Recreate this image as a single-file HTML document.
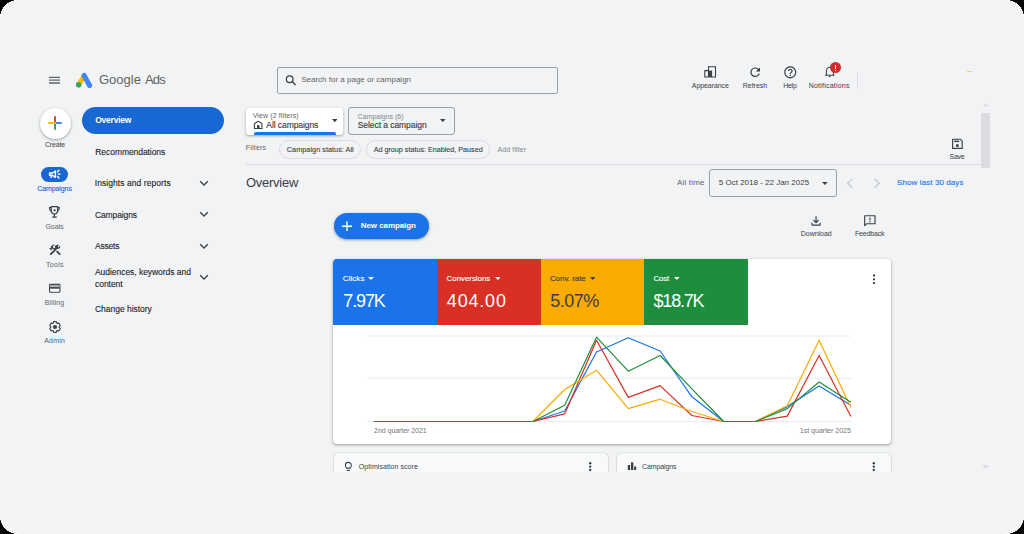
<!DOCTYPE html>
<html><head><meta charset="utf-8">
<style>
*{margin:0;padding:0;box-sizing:border-box}
html,body{width:1024px;height:534px;overflow:hidden;background:#000}
body{font-family:"Liberation Sans",sans-serif;color:#3c4043}
#frame{position:absolute;left:0;top:0;width:1024px;height:534px;background:#f1f3f4;overflow:hidden}
.a{position:absolute}
.t{position:absolute;white-space:nowrap;line-height:1}
svg{display:block}
</style></head><body>
<div id="frame">
<svg class="a" style="left:45px;top:72px" width="20" height="18" viewBox="0 0 20 18"><path d="M4 5.4 H15 M4 8.2 H15 M4 11 H15" stroke="#5f6368" stroke-width="1.3"/></svg>
<svg class="a" style="left:76px;top:72px" width="17" height="16" viewBox="0 0 17 16"><path d="M2.6 12.8 L7.9 4.2" stroke="#fbbc04" stroke-width="4.9"/><path d="M8.1 3.5 L13.6 13.5" stroke="#4285f4" stroke-width="5.1" stroke-linecap="round"/><circle cx="2.6" cy="12.8" r="2.8" fill="#34a853"/></svg>
<div class="t" style="left:99px;top:73.4px;font-size:13px;color:#5f6368">Google <span style="letter-spacing:-0.9px;margin-left:0.5px">Ads</span></div>
<div class="a" style="left:277px;top:67px;width:281px;height:27px;border:1px solid #9aa0a6;border-radius:2px"></div>
<svg class="a" style="left:285px;top:75px" width="12" height="11" viewBox="0 0 12 11"><circle cx="4.7" cy="4.2" r="3.3" fill="none" stroke="#3c4043" stroke-width="1.25"/><path d="M7.1 6.6 L10.6 10" stroke="#3c4043" stroke-width="1.4"/></svg>
<div class="t" style="left:301.20px;top:76.43px;font-size:8px;color:#5f6368">Search for a page or campaign</div>
<svg class="a" style="left:700px;top:62px" width="20" height="20" viewBox="0 0 20 20"><path d="M4.8 8.6 H8.5 V15 H4.8 Z M8.5 4.8 H15.5 V15 H8.5 Z" fill="none" stroke="#3c4043" stroke-width="1.1"/><rect x="8.5" y="8.6" width="3.6" height="6.4" fill="#3c4043"/></svg>
<div class="t" style="left:650.35px;width:120px;text-align:center;top:81.87px;font-size:7px;color:#3c4043;letter-spacing:-0.078px;text-indent:-0.078px">Appearance</div>
<svg class="a" style="left:747.8px;top:65.1px" width="14.4" height="14.4" viewBox="0 0 24 24"><path fill="#3c4043" d="M17.65 6.35C16.2 4.9 14.21 4 12 4c-4.42 0-7.99 3.58-7.990 8s3.57 8 7.99 8c3.73 0 6.84-2.55 7.73-6h-2.08c-.82 2.33-3.04 4-5.65 4-3.31 0-6-2.69-6-6s2.69-6 6-6c1.66 0 3.14.69 4.22 1.78L13 11h7V4l-2.35 2.35z"/></svg>
<div class="t" style="left:695.00px;width:120px;text-align:center;top:81.87px;font-size:7px;color:#3c4043;letter-spacing:-0.017px;text-indent:-0.017px">Refresh</div>
<svg class="a" style="left:782.7px;top:65.3px" width="14.5" height="14.5" viewBox="0 0 24 24"><path fill="#3c4043" d="M11 18h2v-2h-2v2zm1-16C6.48 2 2 6.48 2 12s4.48 10 10 10 10-4.48 10-10S17.52 2 12 2zm0 18c-4.41 0-8-3.59-8-8s3.59-8 8-8 8 3.59 8 8-3.59 8-8 8zm0-14c-2.21 0-4 1.79-4 4h2c0-1.1.9-2 2-2s2 .9 2 2c0 2-3 1.75-3 5h2c0-2.25 3-2.5 3-5 0-2.21-1.79-4-4-4z"/></svg>
<div class="t" style="left:730.00px;width:120px;text-align:center;top:81.87px;font-size:7px;color:#3c4043;letter-spacing:-0.267px;text-indent:-0.267px">Help</div>
<svg class="a" style="left:819px;top:61px" width="20" height="20" viewBox="0 0 20 20"><path d="M7.4 14 V10.2 A3.5 3.9 0 0 1 14.4 10.2 V14 M6 14.2 H15.6" fill="none" stroke="#3c4043" stroke-width="1.1"/><path d="M9.9 15.6 H11.5" stroke="#3c4043" stroke-width="1.1"/></svg>
<div class="a" style="left:829.8px;top:62px;width:11.2px;height:11.2px;border-radius:50%;background:#cc2f27"></div>
<div class="a" style="left:834.8px;top:65px;width:1.3px;height:4.2px;background:#fff"></div>
<div class="a" style="left:834.8px;top:69.9px;width:1.3px;height:1.1px;background:#fff"></div>
<div class="t" style="left:769.05px;width:120px;text-align:center;top:81.87px;font-size:7px;color:#3c4043;letter-spacing:0.225px;text-indent:0.225px">Notifications</div>
<div class="a" style="left:857px;top:72px;width:1px;height:17px;background:#dadce0"></div>
<div class="a" style="left:966.5px;top:71px;width:5.5px;height:1px;background:rgba(251,188,4,.6)"></div>
<div class="a" style="left:40px;top:108px;width:31px;height:31px;border-radius:50%;background:#fff;box-shadow:0 1px 2px rgba(60,64,67,.3),0 1px 3px 1px rgba(60,64,67,.12)"></div>
<svg class="a" style="left:48px;top:116px" width="14" height="14" viewBox="0 0 14 14"><path d="M7 1 V7" stroke="#ea4335" stroke-width="2" stroke-linecap="round"/><path d="M7 7 H13" stroke="#4285f4" stroke-width="2" stroke-linecap="round"/><path d="M7 7 V13" stroke="#34a853" stroke-width="2" stroke-linecap="round"/><path d="M1 7 H7" stroke="#fbbc04" stroke-width="2" stroke-linecap="round"/></svg>
<div class="t" style="left:-5.00px;width:120px;text-align:center;top:140.97px;font-size:7px;color:#3c4043;letter-spacing:-0.160px;text-indent:-0.160px">Create</div>
<div class="a" style="left:41px;top:166.5px;width:27px;height:15.5px;border-radius:8px;background:#1967d2"></div>
<svg class="a" style="left:45px;top:164px" width="20" height="20" viewBox="0 0 20 20"><path d="M4.6 9 H7.5 L10.4 7 V13.3 L7.5 11.3 H4.6 Z" fill="none" stroke="#fff" stroke-width="1.45" stroke-linejoin="round"/><path d="M5.9 11.4 L6.4 13.9" stroke="#fff" stroke-width="1.5"/><path d="M12.6 7.8 L13.9 6.3 M13.2 10.1 H15 M12.6 12.5 L13.9 14" stroke="#fff" stroke-width="1.4" stroke-linecap="round"/></svg>
<div class="t" style="left:-5.40px;width:120px;text-align:center;top:184.57px;font-size:7px;color:#1967d2;letter-spacing:-0.100px;text-indent:-0.100px;-webkit-text-stroke:0.12px #1967d2">Campaigns</div>
<svg class="a" style="left:45px;top:202px" width="20" height="20" viewBox="0 0 20 20"><path d="M6.2 4.6 H12.6 V8.6 C12.6 10.6 11 12 9.4 12.2 C7.8 12 6.2 10.6 6.2 8.6 Z" fill="none" stroke="#3c4043" stroke-width="1.2"/><path d="M6.2 5.6 H4.5 V6.6 C4.5 7.9 5.2 8.8 6.4 9.2 M12.6 5.6 H14.3 V6.6 C14.3 7.9 13.6 8.8 12.4 9.2" fill="none" stroke="#3c4043" stroke-width="1.1"/><path d="M9.4 12.2 V15.2 M7.2 15.2 H11.8" stroke="#3c4043" stroke-width="1.2"/><circle cx="9.6" cy="8.3" r="1.1" fill="#3c4043"/></svg>
<div class="t" style="left:-5.50px;width:120px;text-align:center;top:222.67px;font-size:7px;color:#5f6368;letter-spacing:-0.050px;text-indent:-0.050px">Goals</div>
<svg class="a" style="left:47.6px;top:243.3px" width="14" height="14" viewBox="0 0 24 24"><path fill="#3c4043" d="M13.783 15.172l2.121-2.121 5.996 5.996-2.121 2.121zM17.5 10c1.93 0 3.5-1.57 3.5-3.5 0-.58-.16-1.12-.41-1.6l-2.7 2.7-1.49-1.49 2.7-2.7c-.48-.25-1.02-.41-1.6-.41C13.57 3 12 4.57 12 6.5c0 .41.08.8.21 1.16l-1.85 1.85-1.78-1.78.71-.71-1.41-1.41L12 3.49c-1.17-1.170-3.07-1.17-4.24 0L4.22 7.03l1.41 1.41H2.81l-.71.71 3.54 3.54.71-.71V9.15l1.41 1.41.71-.71 1.78 1.78-7.41 7.41 2.12 2.12L16.34 9.79c.36.13.75.21 1.16.21z"/></svg>
<div class="t" style="left:-5.25px;width:120px;text-align:center;top:260.97px;font-size:7px;color:#5f6368;letter-spacing:0.325px;text-indent:0.325px">Tools</div>
<svg class="a" style="left:45px;top:279px" width="20" height="20" viewBox="0 0 20 20"><rect x="4.6" y="5.4" width="10.3" height="7.8" rx="0.8" fill="#fff" stroke="#3c4043" stroke-width="1.1"/><rect x="5.1" y="5.9" width="9.3" height="2.3" fill="#a8abb0"/><rect x="5.1" y="8.1" width="9.3" height="1.6" fill="#3c4043"/></svg>
<div class="t" style="left:-5.50px;width:120px;text-align:center;top:299.07px;font-size:7px;color:#5f6368;letter-spacing:0.100px;text-indent:0.100px">Billing</div>
<svg class="a" style="left:44.8px;top:316.8px" width="20" height="20" viewBox="0 0 20 20"><path d="M8.00 6.54 L8.67 4.66 L11.33 4.66 L12.00 6.54 L13.96 6.18 L15.29 8.48 L14.00 10.00 L15.29 11.52 L13.96 13.82 L12.00 13.46 L11.33 15.34 L8.67 15.34 L8.00 13.46 L6.04 13.82 L4.71 11.52 L6.00 10.00 L4.71 8.48 L6.04 6.18 Z" fill="none" stroke="#3c4043" stroke-width="1.15" stroke-linejoin="round"/><circle cx="10" cy="10" r="2.1" fill="#3c4043"/></svg>
<div class="t" style="left:-5.50px;width:120px;text-align:center;top:337.47px;font-size:7px;color:#5f6368;letter-spacing:0.200px;text-indent:0.200px">Admin</div>
<div class="a" style="left:82px;top:107.3px;width:142px;height:27px;border-radius:14px;background:#1967d2"></div>
<div class="t" style="left:95.15px;top:115.70px;font-size:8.5px;color:#fff;letter-spacing:-0.214px;font-weight:bold">Overview</div>
<div class="t" style="left:95.30px;top:147.70px;font-size:8.5px;color:#202124;letter-spacing:-0.064px;-webkit-text-stroke:0.1px #202124">Recommendations</div>
<div class="t" style="left:94.80px;top:179.20px;font-size:8.5px;color:#202124;letter-spacing:0.063px;-webkit-text-stroke:0.1px #202124">Insights and reports</div>
<div class="t" style="left:95.00px;top:210.70px;font-size:8.5px;color:#202124;letter-spacing:-0.125px;-webkit-text-stroke:0.1px #202124">Campaigns</div>
<div class="t" style="left:95.00px;top:242.20px;font-size:8.5px;color:#202124;letter-spacing:-0.200px;-webkit-text-stroke:0.1px #202124">Assets</div>
<div class="t" style="left:95.00px;top:268.40px;font-size:8.5px;color:#202124;letter-spacing:-0.045px;-webkit-text-stroke:0.1px #202124">Audiences, keywords and</div>
<div class="t" style="left:95.00px;top:279.80px;font-size:8.5px;color:#202124;letter-spacing:-0.045px;-webkit-text-stroke:0.1px #202124">content</div>
<div class="t" style="left:95.00px;top:305.40px;font-size:8.5px;color:#202124;letter-spacing:-0.023px;-webkit-text-stroke:0.1px #202124">Change history</div>
<svg class="a" style="left:199px;top:180px" width="10" height="7" viewBox="0 0 10 7"><path d="M1.2 1.2 L5 5 L8.8 1.2" fill="none" stroke="#3c4043" stroke-width="1.3"/></svg>
<svg class="a" style="left:199px;top:211px" width="10" height="7" viewBox="0 0 10 7"><path d="M1.2 1.2 L5 5 L8.8 1.2" fill="none" stroke="#3c4043" stroke-width="1.3"/></svg>
<svg class="a" style="left:199px;top:243px" width="10" height="7" viewBox="0 0 10 7"><path d="M1.2 1.2 L5 5 L8.8 1.2" fill="none" stroke="#3c4043" stroke-width="1.3"/></svg>
<svg class="a" style="left:199px;top:274px" width="10" height="7" viewBox="0 0 10 7"><path d="M1.2 1.2 L5 5 L8.8 1.2" fill="none" stroke="#3c4043" stroke-width="1.3"/></svg>
<div class="a" style="left:246px;top:108px;width:97px;height:26.5px;background:#fff;border-radius:3px;box-shadow:0 1px 2px rgba(60,64,67,.3),0 1px 3px 1px rgba(60,64,67,.1)"></div>
<div class="a" style="left:253.5px;top:132px;width:82px;height:2.5px;background:#1a73e8;border-radius:2px 2px 0 0"></div>
<div class="t" style="left:252.70px;top:111.87px;font-size:7px;color:#5f6368;letter-spacing:0.120px">View (2 filters)</div>
<svg class="a" style="left:250px;top:116px" width="16" height="16" viewBox="0 0 16 16"><path d="M4.4 12.5 V7.4 L8.2 5.3 L12 7.4 V12.5 Z" fill="none" stroke="#3c4043" stroke-width="1.1" stroke-linejoin="round"/><rect x="7" y="9.1" width="2.5" height="3.4" fill="#3c4043"/></svg>
<div class="t" style="left:266.30px;top:121.10px;font-size:8.5px;color:#3c4043;letter-spacing:-0.075px;-webkit-text-stroke:0.15px #3c4043">All campaigns</div>
<svg class="a" style="left:331.8px;top:119.4px" width="5.6" height="3.2" viewBox="0 0 5.6 3.2"><path d="M0 0 H5.6 L2.8 3.2 Z" fill="#3c4043"/></svg>
<div class="a" style="left:348px;top:107px;width:107px;height:28px;border:1px solid #9aa0a6;border-radius:3px"></div>
<div class="t" style="left:357.70px;top:113.17px;font-size:7px;color:#80868b">Campaigns (6)</div>
<div class="t" style="left:357.70px;top:121.10px;font-size:8.5px;color:#3c4043;letter-spacing:-0.062px;-webkit-text-stroke:0.15px #3c4043">Select a campaign</div>
<svg class="a" style="left:440.2px;top:119.2px" width="5.6" height="3.2" viewBox="0 0 5.6 3.2"><path d="M0 0 H5.6 L2.8 3.2 Z" fill="#3c4043"/></svg>
<div class="t" style="left:245.70px;top:144.17px;font-size:7px;color:#5f6368;letter-spacing:0.217px">Filters</div>
<div class="a" style="left:279.2px;top:140.1px;width:82.2px;height:18.5px;border:1px solid #dadce0;border-radius:9.5px"></div>
<div class="t" style="left:286.80px;top:145.92px;font-size:7.3px;color:#3c4043;letter-spacing:0.021px;-webkit-text-stroke:0.1px #3c4043">Campaign status: All</div>
<div class="a" style="left:366.2px;top:140.2px;width:124.2px;height:18.4px;border:1px solid #dadce0;border-radius:9.5px"></div>
<div class="t" style="left:373.70px;top:146.02px;font-size:7.3px;color:#3c4043;letter-spacing:-0.055px;-webkit-text-stroke:0.1px #3c4043">Ad group status: Enabled, Paused</div>
<div class="t" style="left:497.50px;top:146.27px;font-size:7px;color:#80868b;letter-spacing:0.111px">Add filter</div>
<svg class="a" style="left:948px;top:135px" width="20" height="18" viewBox="0 0 20 18"><path d="M4.6 4.2 H12.2 L14.2 6.2 V13.4 H4.6 Z" fill="none" stroke="#3c4043" stroke-width="1.15" stroke-linejoin="round"/><rect x="6.2" y="5.6" width="5" height="1.5" fill="#3c4043"/><circle cx="9.4" cy="10.4" r="1.5" fill="#3c4043"/></svg>
<div class="t" style="left:897.15px;width:120px;text-align:center;top:153.37px;font-size:7px;color:#3c4043;letter-spacing:-0.300px;text-indent:-0.300px">Save</div>
<div class="a" style="left:246px;top:164px;width:734px;height:1px;background:#dadce0"></div>
<div class="a" style="left:980.5px;top:112.8px;width:9px;height:55.2px;background:#dadce0"></div>
<svg class="a" style="left:982px;top:103px" width="7" height="4" viewBox="0 0 7 4"><path d="M0.5 3.5 L3.5 0.5 L6.5 3.5 Z" fill="#dadce0"/></svg>
<svg class="a" style="left:982px;top:465px" width="7" height="4" viewBox="0 0 7 4"><path d="M0.5 0.5 L3.5 3.5 L6.5 0.5 Z" fill="#dadce0"/></svg>
<div class="t" style="left:246.00px;top:176.30px;font-size:13px;color:#3c4043;letter-spacing:-0.271px">Overview</div>
<div class="t" style="left:677.00px;top:179.23px;font-size:8px;color:#5f6368;letter-spacing:0.171px">All time</div>
<div class="a" style="left:709px;top:169px;width:128px;height:28px;border:1px solid #9aa0a6;border-radius:3px"></div>
<div class="t" style="left:718.80px;top:179.23px;font-size:8px;color:#3c4043">5 Oct 2018 - 22 Jan 2025</div>
<svg class="a" style="left:822px;top:182.1px" width="5.8" height="3" viewBox="0 0 5.8 3"><path d="M0 0 H5.8 L2.9 3 Z" fill="#3c4043"/></svg>
<svg class="a" style="left:845px;top:177px" width="10" height="12" viewBox="0 0 10 12"><path d="M7.3 1.8 L2.6 6.2 L7.3 10.6" fill="none" stroke="#bdc1c6" stroke-width="1.1"/></svg>
<svg class="a" style="left:872px;top:177px" width="10" height="12" viewBox="0 0 10 12"><path d="M2.6 1.8 L7.3 6.2 L2.6 10.6" fill="none" stroke="#bdc1c6" stroke-width="1.1"/></svg>
<div class="t" style="left:897.10px;top:179.03px;font-size:8px;color:#1a73e8;letter-spacing:0.088px;-webkit-text-stroke:0.12px #1a73e8">Show last 30 days</div>
<div class="a" style="left:333.8px;top:212.7px;width:95.6px;height:26.8px;border-radius:14px;background:#1a73e8;box-shadow:0 1px 2px rgba(60,64,67,.3),0 1px 3px 1px rgba(60,64,67,.15)"></div>
<svg class="a" style="left:340px;top:219.4px" width="14" height="14" viewBox="0 0 14 14"><path d="M7 2.4 V12.1 M2 7.2 H12" stroke="#fff" stroke-width="1.4"/></svg>
<div class="t" style="left:360.80px;top:222.23px;font-size:8px;color:#fff;letter-spacing:-0.082px;font-weight:bold">New campaign</div>
<svg class="a" style="left:809.45px;top:213.65px" width="14.1" height="14.1" viewBox="0 -960 960 960"><path fill="#3c4043" d="M480-320 280-520l56-58 104 104v-326h80v326l104-104 56 58-200 200ZM240-160q-33 0-56.5-23.5T160-240v-120h80v120h480v-120h80v120q0 33-23.5 56.5T720-160H240Z"/></svg>
<div class="t" style="left:756.25px;width:120px;text-align:center;top:229.87px;font-size:7px;color:#3c4043;letter-spacing:-0.043px;text-indent:-0.043px">Download</div>
<svg class="a" style="left:862px;top:213px" width="16" height="16" viewBox="0 0 16 16"><path d="M2.7 2.7 H13 V10.7 H4.6 L2.7 12.6 Z" fill="none" stroke="#3c4043" stroke-width="1.15" stroke-linejoin="round"/><path d="M7.9 4.4 V7.3" stroke="#3c4043" stroke-width="1.2"/><rect x="7.3" y="8.2" width="1.2" height="1.2" fill="#3c4043"/></svg>
<div class="t" style="left:809.70px;width:120px;text-align:center;top:229.87px;font-size:7px;color:#3c4043;letter-spacing:-0.171px;text-indent:-0.171px">Feedback</div>
<div class="a" style="left:333px;top:259px;width:558px;height:185px;background:#fff;border-radius:4px;box-shadow:0 1px 2px rgba(60,64,67,.3),0 1px 3px 1px rgba(60,64,67,.15);overflow:hidden"><div class="a" style="left:0;top:0;width:104px;height:66px;background:#1a73e8"></div><div class="a" style="left:104px;top:0;width:103.5px;height:66px;background:#d93025"></div><div class="a" style="left:207.5px;top:0;width:103.5px;height:66px;background:#f9ab00"></div><div class="a" style="left:311px;top:0;width:103.7px;height:66px;background:#1e8e3e"></div></div>
<div class="t" style="left:342.80px;top:274.53px;font-size:8px;color:#fff;letter-spacing:0.060px;-webkit-text-stroke:0.12px #fff">Clicks</div>
<svg class="a" style="left:368.2px;top:277.2px" width="5.9" height="3" viewBox="0 0 5.9 3"><path d="M0 0 H5.9 L2.95 3 Z" fill="#fff"/></svg>
<div class="t" style="left:343.30px;top:291.76px;font-size:18px;color:#fff;letter-spacing:-1.125px">7.97K</div>
<div class="t" style="left:446.60px;top:274.53px;font-size:8px;color:#fff;letter-spacing:-0.080px;-webkit-text-stroke:0.12px #fff">Conversions</div>
<svg class="a" style="left:494.7px;top:277.2px" width="5.8" height="3" viewBox="0 0 5.8 3"><path d="M0 0 H5.8 L2.9 3 Z" fill="#fff"/></svg>
<div class="t" style="left:446.80px;top:291.76px;font-size:18px;color:#fff;letter-spacing:0.820px">404.00</div>
<div class="t" style="left:549.90px;top:274.53px;font-size:8px;color:#3c4043;letter-spacing:-0.044px;-webkit-text-stroke:0.12px #3c4043">Conv. rate</div>
<svg class="a" style="left:589.9px;top:277.2px" width="5.5" height="3" viewBox="0 0 5.5 3"><path d="M0 0 H5.5 L2.75 3 Z" fill="#3c4043"/></svg>
<div class="t" style="left:550.30px;top:291.76px;font-size:18px;color:#3c4043;letter-spacing:-0.525px">5.07%</div>
<div class="t" style="left:653.60px;top:274.53px;font-size:8px;color:#fff;letter-spacing:-0.300px;-webkit-text-stroke:0.12px #fff">Cost</div>
<svg class="a" style="left:674.1px;top:277.2px" width="5.6" height="3" viewBox="0 0 5.6 3"><path d="M0 0 H5.6 L2.8 3 Z" fill="#fff"/></svg>
<div class="t" style="left:653.60px;top:291.76px;font-size:18px;color:#fff;letter-spacing:-1.240px">$18.7K</div>
<svg class="a" style="left:871px;top:273px" width="6" height="13" viewBox="0 0 6 13"><circle cx="3" cy="2.5" r="1.15" fill="#3c4043"/><circle cx="3" cy="6.3" r="1.15" fill="#3c4043"/><circle cx="3" cy="10.1" r="1.15" fill="#3c4043"/></svg>
<svg class="a" style="left:333px;top:259px" width="558" height="185" viewBox="333 259 558 185"><path d="M367.4 336 H851 M367.4 378.1 H851 M367.4 421.4 H851" stroke="#e8eaed" stroke-width="1"/><polyline fill="none" stroke="#1a73e8" stroke-width="1.2" stroke-linejoin="round" points="373.9,421.5 405.7,421.5 437.5,421.5 469.3,421.5 501.1,421.5 532.9,421.5 564.7,411.0 596.5,352.0 628.3,337.8 660.1,351.0 691.9,396.8 723.7,421.5 755.5,421.5 787.3,406.6 819.1,386.0 850.9,405.3"/><polyline fill="none" stroke="#d93025" stroke-width="1.2" stroke-linejoin="round" points="373.9,421.5 405.7,421.5 437.5,421.5 469.3,421.5 501.1,421.5 532.9,421.5 564.7,413.9 596.5,340.3 628.3,397.4 660.1,385.6 691.9,415.5 723.7,421.5 755.5,421.5 787.3,416.1 819.1,355.5 850.9,416.5"/><polyline fill="none" stroke="#f9ab00" stroke-width="1.2" stroke-linejoin="round" points="373.9,421.5 405.7,421.5 437.5,421.5 469.3,421.5 501.1,421.5 532.9,421.5 564.7,389.5 596.5,370.2 628.3,408.6 660.1,399.2 691.9,411.5 723.7,421.5 755.5,421.5 787.3,405.7 819.1,340.3 850.9,407.6"/><polyline fill="none" stroke="#1e8e3e" stroke-width="1.2" stroke-linejoin="round" points="373.9,421.5 405.7,421.5 437.5,421.5 469.3,421.5 501.1,421.5 532.9,421.5 564.7,405.3 596.5,337.2 628.3,371.2 660.1,355.5 691.9,388.8 723.7,421.5 755.5,421.5 787.3,408.6 819.1,382.0 850.9,402.3"/></svg>
<div class="t" style="left:374.10px;top:426.87px;font-size:7px;color:#70757a;letter-spacing:-0.047px">2nd quarter 2021</div>
<div class="t" style="left:799.80px;top:426.87px;font-size:7px;color:#70757a;letter-spacing:0.007px">1st quarter 2025</div>
<div class="a" style="left:334px;top:452.5px;width:274px;height:40px;background:#f8f9fa;border-radius:5px;box-shadow:0 0 0 0.6px rgba(60,64,67,.12),0 1px 2px rgba(60,64,67,.2)"></div>
<div class="a" style="left:617px;top:452.7px;width:274px;height:40px;background:#f8f9fa;border-radius:5px;box-shadow:0 0 0 0.6px rgba(60,64,67,.12),0 1px 2px rgba(60,64,67,.2)"></div>
<svg class="a" style="left:340px;top:458px" width="18" height="16" viewBox="0 0 18 16"><path d="M6.6 9.9 C5.7 9.2 5.4 8.3 5.4 7.3 A2.95 2.95 0 0 1 11.3 7.3 C11.3 8.3 11 9.2 10.1 9.9 V10.1 H6.6 Z" fill="none" stroke="#3c4043" stroke-width="1.05" stroke-linejoin="round"/><path d="M6.9 12.4 H9.9" stroke="#3c4043" stroke-width="1.1"/></svg>
<div class="t" style="left:358.80px;top:463.07px;font-size:7px;color:#3c4043;letter-spacing:0.065px">Optimisation score</div>
<svg class="a" style="left:586px;top:458px" width="8" height="14" viewBox="0 0 8 14"><circle cx="4.2" cy="5.2" r="1.2" fill="#3c4043"/><circle cx="4.2" cy="8.6" r="1.2" fill="#3c4043"/><circle cx="4.2" cy="12" r="1.2" fill="#3c4043"/></svg>
<svg class="a" style="left:626px;top:460px" width="12" height="12" viewBox="0 0 12 12"><rect x="1.8" y="5" width="2.3" height="5" fill="#3c4043"/><rect x="5" y="2.3" width="2.3" height="7.7" fill="#3c4043"/><rect x="8.1" y="6.5" width="2.1" height="3.5" fill="#3c4043"/></svg>
<div class="t" style="left:642.00px;top:463.17px;font-size:7px;color:#3c4043;letter-spacing:-0.100px">Campaigns</div>
<svg class="a" style="left:870px;top:458px" width="8" height="14" viewBox="0 0 8 14"><circle cx="3.8" cy="5.2" r="1.2" fill="#3c4043"/><circle cx="3.8" cy="8.6" r="1.2" fill="#3c4043"/><circle cx="3.8" cy="12" r="1.2" fill="#3c4043"/></svg>
<div class="a" style="left:0px;top:471.5px;width:1024px;height:63px;background:#f1f3f4"></div>
<svg class="a" style="left:982px;top:465px" width="7" height="4" viewBox="0 0 7 4"><path d="M0.5 0.5 L3.5 3.5 L6.5 0.5 Z" fill="#dadce0"/></svg>
<svg style="position:absolute;left:0;top:0" width="1024" height="534" viewBox="0 0 1024 534">
<g fill="#000" shape-rendering="crispEdges">
<path d="M0 0 H18 A18 18 0 0 0 0 18 Z"/>
<path d="M1024 0 V18 A18 18 0 0 0 1006 0 Z"/>
<path d="M0 534 V516 A18 18 0 0 0 18 534 Z"/>
<path d="M1024 534 H1006 A18 18 0 0 0 1024 516 Z"/>
</g>
<g fill="none" stroke="rgba(255,255,255,.7)" stroke-width="0.8">
<path d="M18 0.4 A17.6 17.6 0 0 0 0.4 18"/>
<path d="M1023.6 18 A17.6 17.6 0 0 0 1006 0.4"/>
<path d="M18 533.6 A17.6 17.6 0 0 1 0.4 516"/>
<path d="M1023.6 516 A17.6 17.6 0 0 1 1006 533.6"/>
</g></svg>
</div>
</body></html>
